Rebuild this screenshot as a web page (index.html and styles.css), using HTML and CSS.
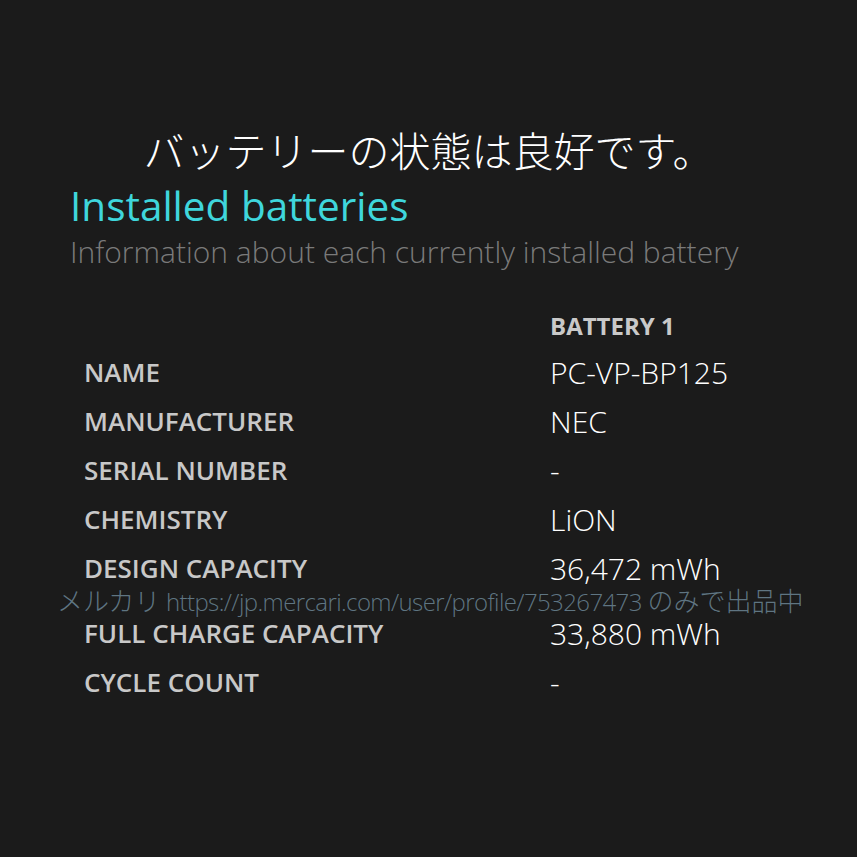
FILE: index.html
```html
<!DOCTYPE html>
<html lang="ja">
<head>
<meta charset="utf-8">
<link rel="stylesheet" href="styles.css">
</head>
<body>
<div class="page">
  <h1 class="status">バッテリーの状態は良好です。</h1>
  <h2 class="section-title">Installed batteries</h2>
  <p class="section-sub">Information about each currently installed battery</p>
  <div class="table">
    <div class="label"></div><div class="col-head">BATTERY 1</div>
    <div class="label">NAME</div><div class="value">PC-VP-BP125</div>
    <div class="label">MANUFACTURER</div><div class="value">NEC</div>
    <div class="label">SERIAL NUMBER</div><div class="value">-</div>
    <div class="label">CHEMISTRY</div><div class="value">LiON</div>
    <div class="label">DESIGN CAPACITY</div><div class="value">36,472 mWh</div>
    <div class="label spaced">FULL CHARGE CAPACITY</div><div class="value spaced">33,880 mWh</div>
    <div class="label">CYCLE COUNT</div><div class="value">-</div>
  </div>
  <div class="watermark">メルカリ <span class="wm-url">https://jp.mercari.com/user/profile/753267473</span> のみで出品中</div>
</div>
</body>
</html>
```
FILE: styles.css
```css
html, body {
  margin: 0;
  padding: 0;
  background: #1b1b1b;
}
.page {
  position: relative;
  width: 857px;
  height: 857px;
  box-sizing: border-box;
  padding-top: 123px;
  font-family: "Open Sans", "Noto Sans", "Noto Sans CJK JP", sans-serif;
}
.status {
  margin: 0;
  text-align: center;
  font-family: "Noto Sans CJK JP", sans-serif;
  font-weight: 300;
  font-size: 41px;
  line-height: 52px;
  color: #ffffff;
}
.section-title {
  margin: 8px 0 0 70px;
  font-weight: 400;
  font-size: 40.5px;
  line-height: 46px;
  color: #3fd6dc;
}
.section-sub {
  margin: 0 0 0 70px;
  font-weight: 300;
  font-size: 30px;
  line-height: 46px;
  color: #7a7a7a;
}
.table {
  display: grid;
  grid-template-columns: 466px auto;
  margin: 29px 0 0 84px;
}
.col-head {
  font-weight: 700;
  font-size: 24px;
  line-height: 44px;
  color: #c9c9c9;
}
.label {
  font-weight: 600;
  font-size: 26px;
  line-height: 49px;
  color: #c8c8c8;
}
.value {
  font-weight: 300;
  font-size: 30px;
  line-height: 49px;
  color: #ffffff;
}
.spaced {
  margin-top: 16px;
}
.watermark {
  position: absolute;
  left: 57px;
  top: 587px;
  font-family: "Noto Sans CJK JP", sans-serif;
  font-weight: 300;
  font-size: 26px;
  line-height: 26px;
  color: rgba(118, 148, 165, 0.75);
  white-space: nowrap;
}
.wm-url {
  font-family: "Open Sans", sans-serif;
  font-size: 24px;
  letter-spacing: -0.6px;
}
```
